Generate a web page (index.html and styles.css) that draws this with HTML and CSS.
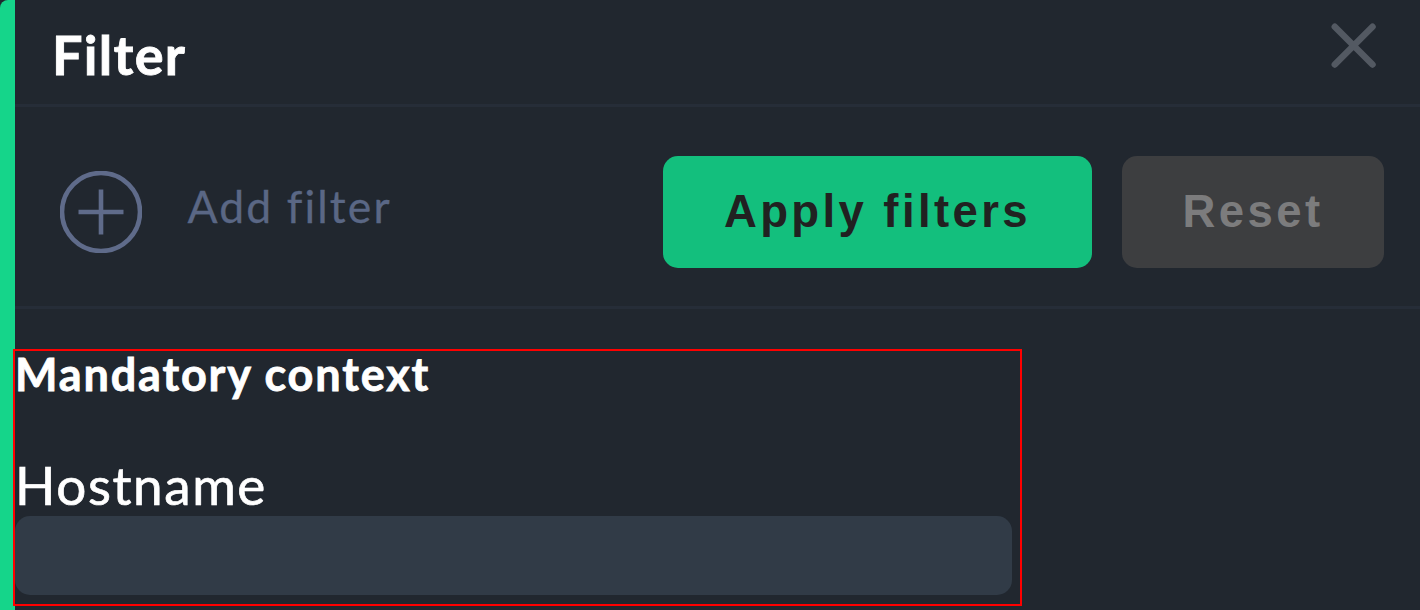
FILE: index.html
```html
<!DOCTYPE html>
<html lang="en">
<head>
<meta charset="utf-8">
<title>Filter</title>
<link rel="stylesheet" href="styles.css">
</head>
<body>
<div class="panel">
  <header class="header">
    <h1 class="title">Filter</h1>
    <svg class="close" width="46" height="46" viewBox="0 0 46 46"><path d="M3.8 4.8 41.5 42.5M41.5 4.8 3.8 42.5"/></svg>
  </header>
  <div class="toolbar">
    <svg class="plus" width="82" height="82" viewBox="0 0 82 82"><circle cx="41" cy="41" r="39"/><path d="M41 18.5V63.5M18.5 41H63.5"/></svg>
    <span class="add">Add filter</span>
    <button class="button apply">Apply filters</button>
    <button class="button reset">Reset</button>
  </div>
  <section class="context">
    <h2 class="heading">Mandatory context</h2>
    <label class="label" for="host">Hostname</label>
    <input class="field" id="host">
  </section>
</div>
</body>
</html>
```

FILE: styles.css
```css
* { box-sizing: border-box; }
body { margin: 0; background: #21272f; font-family: Lato, sans-serif; overflow: hidden; }
.panel { height: 610px; border-left: 15px solid #15d58a; border-top-left-radius: 8px; background: #21272f; }
.header { height: 107px; border-bottom: 3px solid #262d38; display: flex; justify-content: space-between; padding: 22px 43px 0 37px; }
.title { margin: -1px 0 0; color: #fff; font-size: 54px; line-height: 67px; font-weight: 700; letter-spacing: 1.3px; -webkit-text-stroke: 0.8px #fff; }
.close { fill: none; stroke: #535962; stroke-width: 6.5; stroke-linecap: round; }
.toolbar { height: 202px; border-bottom: 3px solid #262d38; display: flex; align-items: flex-start; padding: 49px 36px 0 45px; }
.plus { margin-top: 15px; fill: none; stroke: #5f6b8a; stroke-width: 4.6; }
.add { margin: 21px auto 0 45.5px; color: #5a6785; font-size: 44.5px; line-height: 58px; letter-spacing: 2.1px; -webkit-text-stroke: 0.3px #5a6785; }
.button { height: 112px; border: 0; border-radius: 15px; padding: 0; font: 700 45.5px/110px "Liberation Sans", Arial, sans-serif; letter-spacing: 3.4px; }
.apply { width: 429px; background: #13bf7d; color: #212121; }
.reset { width: 262px; margin-left: 30px; background: #3d3e40; color: #7c7c7d; }
.context { width: 1009px; height: 257px; margin: 40px 0 0 -2px; border: 2px solid #f00; }
.heading { margin: -2px 0 0; color: #fff; font-size: 45px; line-height: 50px; letter-spacing: 1.85px; -webkit-text-stroke: 0.8px #fff; }
.label { display: block; margin-top: 54px; color: #fff; font-size: 53px; line-height: 63px; letter-spacing: 1.6px; -webkit-text-stroke: 0.7px #fff; }
.field { display: block; width: 997px; height: 79px; border: 0; border-radius: 15px; background: #313b47; padding: 0 20px; }
```
